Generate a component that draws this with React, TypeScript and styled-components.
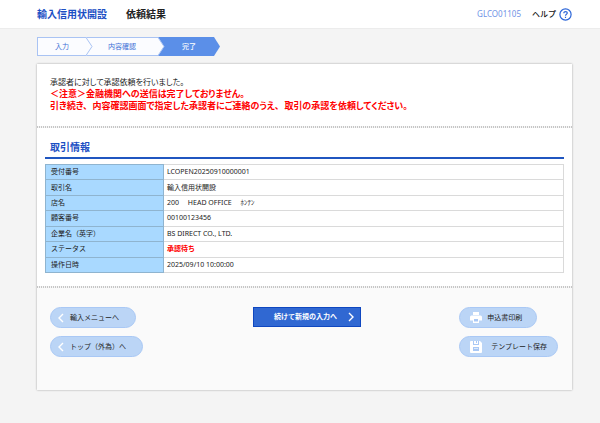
import React from "react";
import styled, { createGlobalStyle, css } from "styled-components";

const GlobalStyle = createGlobalStyle`
  * { box-sizing: border-box; }
  body {
    margin: 0;
    background: #f4f4f4;
    color: #222;
    font-family: "Noto Sans", "Noto Sans CJK JP", sans-serif;
    font-size: 7px;
    line-height: 12px;
  }
`;

const Header = styled.header`
  display: flex;
  align-items: center;
  height: 29px;
  padding: 0 28px 0 37px;
  background: #fff;
  border-bottom: 1px solid #ececec;
`;

const Service = styled.span`
  margin-right: 19px;
  font-size: 10px;
  font-weight: 700;
  color: #1c4fc4;
`;

const Title = styled.h1`
  margin: 0 auto 0 0;
  font-size: 10px;
  font-weight: 700;
  color: #222;
`;

const ScreenId = styled.span`
  margin-right: 11px;
  font-size: 8px;
  color: #6f93e6;
`;

const HelpLink = styled.a`
  display: flex;
  align-items: center;
  gap: 3px;
  font-size: 8px;
  font-weight: 500;
  color: #111;
  text-decoration: none;
`;

const Main = styled.main`
  padding: 8px 28px 32px 37px;
`;

const Steps = styled.ol`
  display: grid;
  grid-template-columns: 49px 72px 62px;
  height: 19px;
  width: max-content;
  margin: 0 0 8px;
  padding: 0;
  list-style: none;
`;

const Step = styled.li<{ $active?: boolean }>`
  position: relative;
  display: flex;
  align-items: center;
  justify-content: center;
  color: ${(p) => (p.$active ? "#fff" : "#3d6fd6")};
  font-weight: ${(p) => (p.$active ? 500 : 400)};
  background: ${(p) => (p.$active ? "#5b8fe8" : "#fbfcff")};
  border: solid #a9c3f3;
  border-width: ${(p) => (p.$active ? "0" : "1px 0")};
  ${(p) =>
    p.$active &&
    css`
      clip-path: polygon(0 0, calc(100% - 6px) 0, 100% 50%, calc(100% - 6px) 100%, 0 100%);
    `}
  &:first-child { border-left-width: 1px; }
`;

const StepTip = styled.svg`
  position: absolute;
  z-index: 1;
  top: -1px;
  left: 100%;
  width: 7px;
  height: 19px;
`;

const Panel = styled.section`
  background: #fff;
  box-shadow: 0 0 2px rgba(0, 0, 0, 0.35);
`;

const Divider = styled.hr`
  height: 2px;
  margin: 0;
  border: 0;
  background: repeating-linear-gradient(90deg, #c6c6c6 0 1px, #f6f6f6 1px 2px);
`;

const Message = styled.div`
  padding: 12px 13px 14px;
  font-feature-settings: "palt";
`;

const Note = styled.p`
  margin: 0;
  font-size: 8px;
`;

const Warning = styled.p`
  margin: 0;
  font-size: 9px;
  font-weight: 700;
  color: #f00;
`;

const Clause = styled.span`
  margin-right: 5px;
`;

const Info = styled.div`
  padding: 10px 8px 13px;
`;

const InfoTitle = styled.h2`
  margin: 0 0 5px;
  padding: 2px 5px 3px;
  border-bottom: 2px solid #2056c0;
  font-size: 10px;
  line-height: 14px;
  font-weight: 700;
  color: #1c4fc4;
`;

const Details = styled.table`
  width: 100%;
  height: 109px;
  border-collapse: collapse;
  line-height: 10px;
  th, td {
    padding: 0 3px;
    text-align: left;
    font-weight: 400;
    border: 1px solid #dadada;
  }
  th {
    width: 118px;
    padding-left: 5px;
    background: #a9d9ff;
    border-color: #8fb4cf;
  }
`;

const Status = styled.strong`
  font-weight: 700;
  color: #f00;
`;

const Actions = styled.div`
  display: grid;
  grid-template-columns: 1fr auto 1fr;
  padding: 19px 8px 33px 13px;
  background: #fafafa;
`;

const ActionColumn = styled.div<{ $end?: boolean }>`
  display: flex;
  flex-direction: column;
  align-items: flex-start;
  gap: 8px;
  ${(p) => p.$end && css`
    justify-self: end;
    margin-right: 6px;
  `}
`;

const PillButton = styled.button<{ $gap: number }>`
  display: flex;
  align-items: center;
  gap: ${(p) => p.$gap}px;
  height: 21px;
  padding: 0 16px 0 7px;
  border: 1px solid #a9c8f5;
  border-radius: 11px;
  background: #bbd5f6;
  color: #222;
  font: inherit;
`;

const ToolButton = styled(PillButton)`
  min-width: 78px;
  padding: 0 10px;
`;

const PrimaryButton = styled.button`
  display: flex;
  align-items: center;
  gap: 11px;
  height: 20px;
  padding: 0 6px 0 20px;
  border: 1px solid #0f47c0;
  background: #3068d2;
  color: #fff;
  font: inherit;
  font-weight: 700;
`;

const Chevron = ({ right = false }: { right?: boolean }) => (
  <svg width="6" height="10" viewBox="0 0 6 10" fill="none" stroke="#fff" strokeWidth="1.4" aria-hidden="true">
    <path d={right ? "M1 1l4 4-4 4" : "M5 1L1 5l4 4"} />
  </svg>
);

const Tip = ({ from, to }: { from: string; to: string }) => (
  <StepTip viewBox="0 0 7 19" aria-hidden="true">
    <path d="M0 0L6 9.500L0 19Z" fill={from} />
    <path d="M0 0.500L6 9.500L0 18.500" fill="none" stroke={to} />
  </StepTip>
);

const HelpIcon = () => (
  <svg width="13" height="13" viewBox="0 0 13 13" fill="none" stroke="#2c66d8" aria-hidden="true">
    <circle cx="6.500" cy="6.500" r="5.600" strokeWidth="1.200" />
    <path d="M4.800 5.300C4.800 3 8.300 3.200 8.300 5.100C8.300 6.300 6.500 6.300 6.500 7.700M6.500 8.700V9.900" strokeWidth="1.200" />
  </svg>
);

const PrinterIcon = () => (
  <svg width="12" height="11" viewBox="0 0 12 11" aria-hidden="true">
    <path fill="#fff" d="M3 0h6v3H3zM1.500 3.500h9Q12 3.500 12 5v3.500H0V5Q0 3.500 1.500 3.500zM3 7h6v4H3z" />
    <path fill="#a9c8f5" d="M4 7h4v2.500H4z" />
  </svg>
);

const SaveIcon = () => (
  <svg width="12" height="12" viewBox="0 0 12 12" aria-hidden="true">
    <path fill="#fff" d="M1 0h9l2 2v9q0 1-1 1H1q-1 0-1-1V1Q0 0 1 0z" />
    <path fill="#a9c8f5" d="M3 0h1v3h4V0h1v4H3zM6 0h1v2H6zM3 6h6v4H3z" />
    <path stroke="#dceafc" d="M4 7.500h4" />
  </svg>
);

const rows: [string, React.ReactNode][] = [
  ["受付番号", "LCOPEN20250910000001"],
  ["取引名", "輸入信用状開設"],
  ["店名", "200　 HEAD OFFICE　 ﾎﾝﾃﾝ"],
  ["顧客番号", "00100123456"],
  ["企業名（英字）", "BS DIRECT CO., LTD."],
  ["ステータス", <Status>承認待ち</Status>],
  ["操作日時", "2025/09/10 10:00:00"],
];

export default function App() {
  return (
    <>
      <GlobalStyle />
      <Header>
        <Service>輸入信用状開設</Service>
        <Title>依頼結果</Title>
        <ScreenId>GLCO01105</ScreenId>
        <HelpLink href="#help">ヘルプ<HelpIcon /></HelpLink>
      </Header>
      <Main>
        <Steps>
          <Step>入力<Tip from="#fbfcff" to="#a9c3f3" /></Step>
          <Step>内容確認<Tip from="#fbfcff" to="#a9c3f3" /></Step>
          <Step $active aria-current="step">完了</Step>
        </Steps>
        <Panel>
          <Message>
            <Note>承認者に対して承認依頼を行いました。</Note>
            <Warning>＜注意＞金融機関への送信は完了しておりません。</Warning>
            <Warning>
              <Clause>引き続き、</Clause>
              <Clause>内容確認画面で指定した承認者にご連絡のうえ、</Clause>
              取引の承認を依頼してください。
            </Warning>
          </Message>
          <Divider />
          <Info>
            <InfoTitle>取引情報</InfoTitle>
            <Details>
              <tbody>
                {rows.map(([label, value]) => (
                  <tr key={label}>
                    <th scope="row">{label}</th>
                    <td>{value}</td>
                  </tr>
                ))}
              </tbody>
            </Details>
          </Info>
          <Divider />
          <Actions>
            <ActionColumn>
              <PillButton type="button" $gap={6}><Chevron />輸入メニューへ</PillButton>
              <PillButton type="button" $gap={6}><Chevron />トップ（外為）へ</PillButton>
            </ActionColumn>
            <ActionColumn>
              <PrimaryButton type="button">続けて新規の入力へ<Chevron right /></PrimaryButton>
            </ActionColumn>
            <ActionColumn $end>
              <ToolButton type="button" $gap={5}><PrinterIcon />申込書印刷</ToolButton>
              <ToolButton type="button" $gap={9}><SaveIcon />テンプレート保存</ToolButton>
            </ActionColumn>
          </Actions>
        </Panel>
      </Main>
    </>
  );
}
